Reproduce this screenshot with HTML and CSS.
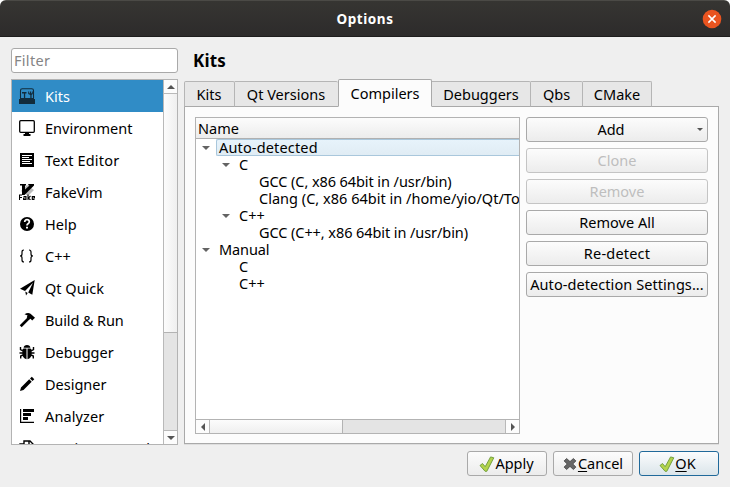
FILE: index.html
```html
<!DOCTYPE html>
<html lang="en">
<head>
<meta charset="utf-8">
<title>Options</title>
<link rel="stylesheet" href="styles.css">
</head>
<body>
<div class="window">
  <header class="titlebar">
    <span class="title">Options</span>
    <svg class="close" width="20" height="20" viewBox="0 0 20 20"><circle cx="10" cy="10" r="9.3" fill="#e95420"/><path d="M6.4 6.4l7.2 7.2M13.6 6.4l-7.2 7.2" stroke="#fff" stroke-width="1.5"/></svg>
  </header>
  <main class="content">
    <aside class="side">
      <input class="filter" placeholder="Filter" aria-label="Filter">
      <div class="list">
        <ul class="nav">
          <li class="selected"><svg width="16" height="16" viewBox="0 0 16 16"><path d="M1.5 10V2.5Q1.5 .7 3.3 .7H12.7Q14.5 .7 14.5 2.5V10" fill="none" stroke="#122c3c" stroke-width="1.1"/><path d="M0 11H1V10H15V11H16V16H0Z" fill="#122c3c"/><path d="M3 4h4.5v1.4H6.2V10H4.9V5.4H3z M9.2 3.5h1v1.7h.8V3.5h1v1.7h.8V3.5h1v2.4l-1.2 1V10h-1.3V6.9L9.2 5.9z" fill="#122c3c"/></svg><span>Kits</span></li>
          <li><svg width="16" height="16" viewBox="0 0 16 16"><rect x=".7" y=".7" width="14.6" height="11.6" rx="1" fill="none" stroke="#000" stroke-width="1.3"/><path d="M6 12h4v2h1.5v2h-7v-2H6z"/></svg><span>Environment</span></li>
          <li><svg width="16" height="16" viewBox="0 0 16 16"><path d="M1 1h14v14H1z"/><path d="M3 3.5h10M3 5.5h7M3 7.5h10M3 9.5h8M3 11.5h10" stroke="#fff"/></svg><span class="t-text">Text Editor</span></li>
          <li><svg width="16" height="16" viewBox="0 0 16 16"><path d="M8 1l7 5-6 6-7-5z" fill="#bbb"/><path d="M1 0h6v1.5H6v4L10.5 1.5H9.3V0H15v1.5L5.5 11H3V1.5H1z"/><path d="M.5 16v-5H3M.5 13.5H3M4.5 12.5H7V16M7 14H4.6v1.5H7M9 10.5V16M11.5 12L9.3 14l2.2 2M15.5 15.5H13.3v-3h2.2V14h-2" fill="none" stroke="#000" stroke-width="1.1"/></svg><span>FakeVim</span></li>
          <li><svg width="16" height="16" viewBox="0 0 16 16"><circle cx="8" cy="8" r="7"/><path d="M5.7 6Q5.7 3.7 8 3.7t2.3 2.1Q10.3 7 9 7.8 8 8.4 8 9.6" fill="none" stroke="#fff" stroke-width="1.7"/><path d="M7 10.7h2v1.8H7z" fill="#fff"/></svg><span>Help</span></li>
          <li><svg width="16" height="16" viewBox="0 0 16 16"><path d="M5 2Q3 2 3 4v2q0 2-2 2 2 0 2 2v2q0 2 2 2M10 2q2 0 2 2v2q0 2 2 2-2 0-2 2v2q0 2-2 2" fill="none" stroke="#000" stroke-width="1.2"/></svg><span>C++</span></li>
          <li><svg width="16" height="16" viewBox="0 0 16 16"><path d="M15.7 0L13.3 14.7 9.2 12.6 14 2.8 6 11 1 8.7zM6.3 11.5L8.7 13 7 15.5z"/></svg><span>Qt Quick</span></li>
          <li><svg width="16" height="16" viewBox="0 0 16 16"><path d="M1.7 14.2L10.2 5.7" stroke="#000" stroke-width="2.7"/><path d="M5.5 2.3Q9-.2 11.5 1.7L16 5.8 13.2 8.5 11.5 6.7 10 7.5 7.7 5.3 8.6 3.5z"/></svg><span class="t-build">Build &amp; Run</span></li>
          <li><svg width="16" height="16" viewBox="0 0 16 16"><path d="M4.6 3.8Q5 1 8 1t3.4 2.8zM7.5 4.4V15.2Q3.4 14 3.4 10V5.5L4.6 4.4zM8.5 4.4V15.2Q12.6 14 12.6 10V5.5L11.4 4.4z"/><path d="M1.5 3v2.5L4 7M14.5 3v2.5L12 7M.5 9H4M15.5 9H12M1.7 14.5V12L4 11M14.3 14.5V12L12 11" fill="none" stroke="#000" stroke-width="1.4"/></svg><span>Debugger</span></li>
          <li><svg width="16" height="16" viewBox="0 0 16 16"><path d="M1 15l1-3.5 8.2-8.2 2.5 2.5L4.5 14zM11 2.5L12.8.8l2.5 2.5-1.8 1.7z"/></svg><span>Designer</span></li>
          <li><svg width="16" height="16" viewBox="0 0 16 16"><path d="M1 1h1.2v12.8H15V15H1zM4 1h11v3H4zM4 5h8v3H4zM4 9h5v3H4z"/></svg><span class="t-analyzer">Analyzer</span></li>
          <li><svg width="16" height="16" viewBox="0 0 16 16"><path d="M5 10V1h6l3 3v7M1 14V4h4M10 1v4h4" fill="none" stroke="#000" stroke-width="1.4"/></svg><span>Version Control</span></li>
        </ul>
        <div class="vbar">
          <div class="up"><svg width="8" height="4" viewBox="0 0 8 4"><path d="M4 0l4 4H0z"/></svg></div>
          <div class="vthumb"></div>
          <div class="down"><svg width="8" height="4" viewBox="0 0 8 4"><path d="M4 4L0 0h8z"/></svg></div>
        </div>
      </div>
    </aside>
    <section class="page">
      <h1>Kits</h1>
      <nav class="tabs">
        <div class="tab tab-kits"><span>Kits</span></div>
        <div class="tab tab-qt"><span>Qt Versions</span></div>
        <div class="tab tab-comp active"><span>Compilers</span></div>
        <div class="tab tab-debug"><span>Debuggers</span></div>
        <div class="tab tab-qbs"><span>Qbs</span></div>
        <div class="tab tab-cmake"><span>CMake</span></div>
      </nav>
      <div class="pane">
        <div class="tree">
          <div class="thead"><span>Name</span></div>
          <div class="rows">
            <div class="row current"><i></i><span class="t-auto">Auto-detected</span></div>
            <div class="row l1"><i></i><span>C</span></div>
            <div class="row l2"><span class="t-gcc">GCC (C, x86 64bit in /usr/bin)</span></div>
            <div class="row l2"><span class="t-clang">Clang (C, x86 64bit in /home/yio/Qt/Tools</span></div>
            <div class="row l1"><i></i><span>C++</span></div>
            <div class="row l2"><span class="t-gcc">GCC (C++, x86 64bit in /usr/bin)</span></div>
            <div class="row"><i></i><span class="t-manual">Manual</span></div>
            <div class="row leaf"><span>C</span></div>
            <div class="row leaf"><span>C++</span></div>
          </div>
          <div class="hbar">
            <div class="left"><svg width="4" height="8" viewBox="0 0 4 8"><path d="M0 4l4-4v8z"/></svg></div>
            <div class="hthumb"></div>
            <div class="right"><svg width="4" height="8" viewBox="0 0 4 8"><path d="M4 4L0 0v8z"/></svg></div>
          </div>
        </div>
        <div class="actions">
          <button class="add"><span>Add</span><svg class="caret" width="6" height="3" viewBox="0 0 6 3"><path d="M0 0h6L3 3z"/></svg></button>
          <button disabled><span>Clone</span></button>
          <button disabled><span>Remove</span></button>
          <button><span>Remove All</span></button>
          <button><span class="t-redetect">Re-detect</span></button>
          <button><span class="t-settings">Auto-detection Settings...</span></button>
        </div>
      </div>
    </section>
  </main>
  <footer class="footer">
    <button><svg width="16" height="16" viewBox="0 0 16 16"><path class="check" d="M1 9.5l2.5-2 2.7 3.2L11.6.9l3.2.9L7.8 15.3H6.1z"/></svg><span>Apply</span></button>
    <button><svg width="16" height="16" viewBox="0 0 16 16"><path class="cross" d="M4.6 2.5L8 5.6l3.4-3.1 2.5 2.4L10.8 8l3.1 3.1-2.5 2.4L8 10.4l-3.4 3.1-2.5-2.4L5.2 8 2.1 4.9z"/></svg><span><u>C</u>ancel</span></button>
    <button class="default"><svg width="16" height="16" viewBox="0 0 16 16"><path class="check" d="M1 9.5l2.5-2 2.7 3.2L11.6.9l3.2.9L7.8 15.3H6.1z"/></svg><span><u>O</u>K</span></button>
  </footer>
</div>
</body>
</html>
```
FILE: styles.css
```css
* { box-sizing: border-box; }
body { margin: 0; background: #fff; font: 14.5px/17px "Noto Sans", "Open Sans", sans-serif; color: #000; }
svg { display: block; flex: none; }
span { white-space: nowrap; }
.window { width: 730px; height: 487px; background: #efefef; border-radius: 6px 6px 0 0; overflow: hidden; display: flex; flex-direction: column; }
.titlebar { height: 37px; flex: none; background: linear-gradient(#363532, #2d2b2b); border-top: 1px solid #4b4a46; border-bottom: 1px solid #1e1d1d; display: grid; grid-template-columns: 1fr auto 1fr; align-items: center; padding-right: 8px; }
.title { grid-column: 2; color: #fff; font-weight: 700; font-size: 13.5px; letter-spacing: .55px; padding: 1px 0 0 8px; }
.close { justify-self: end; }
.content { display: flex; height: 407px; padding: 11px 11px 0; gap: 6px; }
.side { width: 167px; display: flex; flex-direction: column; gap: 6px; }
.filter { flex: none; width: 167px; height: 25px; border: 1px solid #a9a9a9; border-radius: 3px; background: #fff; padding: 0 2px 1px; font: inherit; outline: 0; letter-spacing: .3px; }
.filter::placeholder { color: #858585; opacity: 1; }
.list { flex: none; height: 366px; border: 1px solid #b3b3b3; background: #fff; display: flex; }
.nav { list-style: none; margin: 0; padding: 0; width: 151px; height: 364px; overflow: hidden; }
.nav li { height: 32px; display: flex; align-items: center; gap: 10px; padding: 0 0 0 7px; }
.nav span { padding-top: 1px; }
.nav .selected { background: #308cc6; color: #fff; }
.vbar { width: 14px; flex: none; border-left: 1px solid #b9b9b9; background: #e4e4e4; display: flex; flex-direction: column; }
.vbar path, .hbar path, .caret path { fill: #555; }
.up, .down { height: 14px; display: flex; align-items: center; justify-content: center; background: #fcfcfc; }
.up { border-bottom: 1px solid #b9b9b9; }
.down { border-top: 1px solid #b9b9b9; margin-top: auto; }
.vthumb { height: 239px; background: linear-gradient(90deg, #fcfcfc, #efefef); border-bottom: 1px solid #b3b3b3; }
.page { width: 535px; }
h1 { font-size: 17px; line-height: 24px; margin: 1px 0 6px 9px; letter-spacing: .15px; }
.tabs { display: flex; height: 28px; align-items: flex-end; position: relative; }
.tab { height: 26px; border: 1px solid #b5b5b5; border-left: 0; border-bottom-color: #a9a9a9; background: #e7e7e7; border-radius: 0 2px 0 0; display: flex; align-items: center; justify-content: center; padding-top: 1px; }
.tab-kits { width: 51px; border-left: 1px solid #b5b5b5; border-radius: 2px 2px 0 0; padding-right: 1px; }
.tab-qt { width: 103px; border-right: 0; padding-right: 1px; }
.tab-comp { width: 94px; }
.tab-debug { width: 99px; }
.tab-qbs { width: 52px; }
.tab-cmake { width: 69px; }
.tab.active { height: 28px; background: #fcfcfc; border: 1px solid #a9a9a9; border-bottom-color: #fcfcfc; border-radius: 2px 2px 0 0; }
.pane { height: 338px; margin-top: -1px; border: 1px solid #a9a9a9; background: #fcfcfc; display: flex; gap: 6px; padding: 10px; box-shadow: 0 1px #dedede; }
.tree { width: 325px; height: 317px; border: 1px solid #b3b3b3; background: #fff; display: flex; flex-direction: column; }
.thead { height: 21px; flex: none; border-bottom: 1px solid #b0b0b0; background: linear-gradient(#fcfcfc, #ececec); padding: 2px 0 0 2px; }
.rows { flex: 1; overflow: hidden; }
.row { height: 17px; display: flex; }
.row i { width: 8px; height: 4px; margin: 7px 6px 0; background: #636363; clip-path: polygon(0 0, 100% 0, 50% 100%); flex: none; }
.row span { padding-left: 3px; }
.l1 { padding-left: 20px; }
.l2 { padding-left: 60px; }
.leaf { padding-left: 40px; }
.current span { flex: 1; background: linear-gradient(#e7f3fb, #e0ecf4); border: 1px solid #a9c7dc; border-right: 0; padding-left: 2px; border-radius: 2px 0 0 2px; line-height: 15px; }
.hbar { flex: none; height: 14px; border-top: 1px solid #b3b3b3; background: #e4e4e4; display: flex; }
.left, .right { width: 14px; background: #fcfcfc; display: flex; align-items: center; justify-content: center; }
.left { border-right: 1px solid #b9b9b9; }
.right { border-left: 1px solid #b9b9b9; margin-left: auto; }
.hthumb { width: 133px; background: linear-gradient(#fcfcfc, #efefef); border-right: 1px solid #b3b3b3; }
.actions { display: flex; flex-direction: column; gap: 6px; }
button { width: 182px; height: 25px; padding: 0; border: 1px solid #a9a9a9; border-radius: 3px; background: linear-gradient(#fcfcfc, #ececec); color: #000; font: inherit; display: flex; align-items: center; justify-content: center; }
button:disabled { color: #bebebe; border-color: #c4c4c4; }
.add { position: relative; padding-right: 12px; }
.caret { position: absolute; right: 4px; top: 10px; }
.footer { display: flex; justify-content: flex-end; gap: 6px; padding: 7px 11px 0 0; }
.footer button { width: 80px; padding-right: 1px; }
.footer .default { border-color: #20699a; background: linear-gradient(#fbfcfd, #dbe5ea); padding-right: 3px; }
.check { fill: #b3d34c; stroke: #6a9a35; stroke-width: .9; }
.cross { fill: #666; stroke: #444; stroke-width: .8; }
u { text-underline-offset: 2px; }
.t-text { letter-spacing: .18px; }
.t-build { letter-spacing: -.12px; }
.t-analyzer { letter-spacing: .12px; }
.t-auto { letter-spacing: .16px; }
.t-gcc { letter-spacing: -.08px; }
.t-clang { letter-spacing: .02px; }
.t-manual { letter-spacing: -.1px; }
.t-redetect { letter-spacing: .2px; }
.t-settings { letter-spacing: .07px; }
```
